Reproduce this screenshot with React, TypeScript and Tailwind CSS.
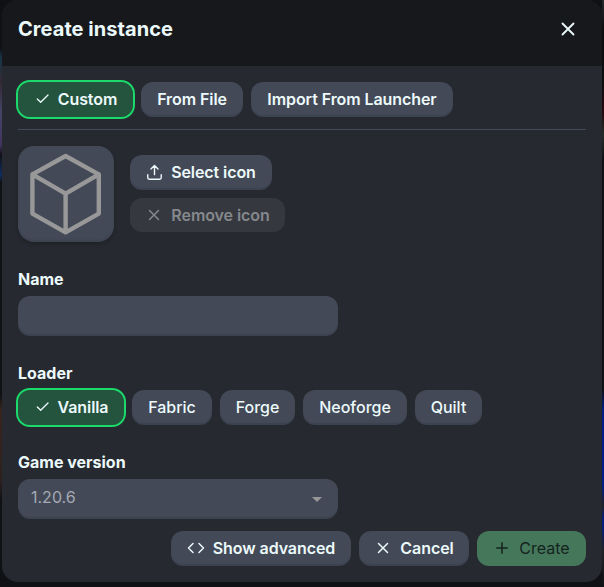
import type { ReactNode } from 'react'

const raised = 'shadow-[inset_0_-2px_1px_rgba(17,24,39,0.12)]'

function Icon({ children, className = 'size-4', sw = 2 }: { children: ReactNode; className?: string; sw?: number }) {
  return (
    <svg viewBox="0 0 24 24" fill="none" stroke="currentColor" strokeWidth={sw} strokeLinecap="round" strokeLinejoin="round" className={`shrink-0 ${className}`}>
      {children}
    </svg>
  )
}

const Check = () => <Icon><path d="M21 6 10 17l-5-5" /></Icon>
const Cross = ({ className }: { className?: string }) => <Icon className={className}><path d="M18 6 6 18M6 6l12 12" /></Icon>

function Button({ width, icon, children, height = 'h-[35px]', className = 'font-semibold tracking-[-0.005em]', tone = `bg-[#434956] text-[#ecf9fb] ${raised}` }: { width: string; height?: string; icon?: ReactNode; children: ReactNode; className?: string; tone?: string }) {
  return (
    <button className={`flex shrink-0 items-center justify-center gap-2 rounded-xl pb-px whitespace-nowrap ${height} ${width} ${tone} ${className}`}>
      {icon}
      <span>{children}</span>
    </button>
  )
}

const selected = 'bg-[#25543e] text-[#ecf9fb] outline-2 outline-[#1bd96a]'

export default function App() {
  return (
    <div className="h-[587px] w-[604px] overflow-hidden bg-[#101115] font-['Inter','Liberation_Sans',sans-serif] text-base leading-5 text-[#ecf9fb]">
      <div className="flex h-full bg-[linear-gradient(to_right,transparent_2px,#101115_2px,#101115_602px,transparent_602px),linear-gradient(to_bottom,#101115_48px,#173746_58px,#342934_82px,#454466_112px,#41345f_145px,#101115_155px,#102e60_175px,#101115_182px,#101115_395px,#38251e_410px,#2d211e_480px,#101115_500px)]">
        <div className="w-[2px] shrink-0" />
        <main className="flex h-[582px] w-[600px] flex-col overflow-hidden rounded-2xl bg-[#26292f]">
          <header className="flex h-[66px] shrink-0 items-start justify-between bg-[#16181c] px-4 pt-[17px]">
            <h1 className="text-[20px] leading-6 font-bold tracking-[0.003em]">Create instance</h1>
            <button className="mr-[7px] flex h-6 items-center"><Cross className="size-[22px]" /></button>
          </header>
          <div className="flex flex-col px-4 pt-4">
            <div className="flex gap-2">
              <Button width="w-[115px]" icon={<Check />} tone={selected}>Custom</Button>
              <Button width="w-[102px]">From File</Button>
              <Button width="w-[202px]">Import From Launcher</Button>
            </div>
            <hr className="mt-3 h-px w-[568px] border-0 bg-[#434956]" />
            <div className="mt-4 flex h-24 items-start gap-4">
              <div className="flex size-24 items-center justify-center rounded-2xl bg-[#434956] text-[#989898] shadow-[inset_0_-2px_2px_rgba(17,24,39,0.1),0_2px_4px_rgba(0,0,0,0.2)]">
                <Icon className="size-24" sw={1.1}>
                  <path d="M20.2 7.1v9.8l-8.3 4.7-8.3-4.7V7.1l8.3-4.6zM3.6 7.1l8.3 4.8 8.3-4.8M11.9 11.9v9.7" />
                </Icon>
              </div>
              <div className="flex flex-col gap-2 pt-[9px]">
                <Button width="w-[142px]" icon={<Icon className="size-[17px]"><path d="M2.5 15v4.5a2 2 0 0 0 2 2h15a2 2 0 0 0 2-2V15M7 7l5-5 5 5M12 2v13" /></Icon>}>Select icon</Button>
                <Button width="w-[155px]" height="h-[34px]" icon={<Cross className="size-[18px]" />} tone="bg-[#35383f] text-[#85888d]">Remove icon</Button>
              </div>
            </div>
            <label className="mt-[27px] font-bold">Name</label>
            <input aria-label="Name" className={`mt-[7px] h-10 w-80 rounded-xl bg-[#434956] px-3 outline-none ${raised}`} />
            <span className="mt-[27px] font-bold">Loader</span>
            <div className="mt-[7px] flex gap-2">
              <Button width="w-[106px]" icon={<Check />} tone={selected}>Vanilla</Button>
              <Button width="w-20" className="font-medium">Fabric</Button>
              <Button width="w-[75px]" className="font-medium">Forge</Button>
              <Button width="w-[104px]" className="font-medium">Neoforge</Button>
              <Button width="w-[67px]" className="font-medium">Quilt</Button>
            </div>
            <span className="mt-[27px] font-bold">Game version</span>
            <div className={`mt-[7px] flex h-10 w-80 items-center justify-between rounded-xl bg-[#434956] pr-4 pb-1 pl-[13px] text-[#a5aab4] ${raised}`}>
              <span>1.20.6</span>
              <span className="mt-[5px] border-x-[5px] border-t-[5px] border-x-transparent border-t-[#989898]" />
            </div>
            <footer className="mt-3 flex justify-end gap-2">
              <Button width="w-[180px]" icon={<Icon className="size-[18px]"><path d="m16 18 6-6-6-6M8 6l-6 6 6 6" /></Icon>}>Show advanced</Button>
              <Button width="w-[110px]" icon={<Cross className="size-[18px]" />}>Cancel</Button>
              <Button width="w-[109px]" icon={<Icon className="size-[18px]"><path d="M12 5v14M5 12h14" /></Icon>} className="font-normal" tone="bg-[#45775b] text-[#14241d]">Create</Button>
            </footer>
          </div>
        </main>
        <div className="w-[2px] shrink-0 bg-[linear-gradient(to_bottom,#24282b,#0d0c0e_30px,#0d0c0e_80px,#24090e_110px,#222e27_135px,#101115_160px,#101115_390px,#001d86_410px,#001d86_485px,#202226_505px,#001d86_522px,#202226_550px,#101115)]" />
      </div>
    </div>
  )
}
